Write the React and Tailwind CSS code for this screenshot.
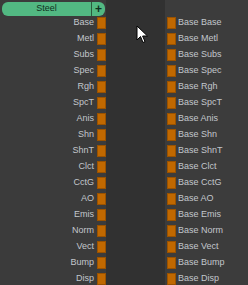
import React from 'react'

const inputs = ['Base', 'Metl', 'Subs', 'Spec', 'Rgh', 'SpcT', 'Anis', 'Shn', 'ShnT', 'Clct', 'CctG', 'AO', 'Emis', 'Norm', 'Vect', 'Bump', 'Disp']

function Port() {
    return <div className="h-[12px] w-[9px] bg-[#c06800] border border-[#9a5200]" />
}

export default function App() {
    return (
        <div
            className="relative flex h-[285px] w-[248px] overflow-hidden bg-[#313131] text-[9px] text-[#c3c7cc]"
            style={{ fontFamily: '"Liberation Sans", Arial, sans-serif' }}
        >
            <div className="w-[106px] bg-[#3b3b3b] pt-[2px]">
                <div className="ml-[2px] flex h-[14px] w-[103px] items-stretch overflow-hidden rounded-[6px] bg-[#52b882] text-[#10301f]">
                    <div className="flex flex-1 items-center justify-center text-[9px]">Steel</div>
                    <div className="flex w-[14px] items-center justify-center border-l border-[#2a5a3e] text-[12px] font-bold leading-none">+</div>
                </div>
                <div className="mt-[-1px]">
                    {inputs.map((n) => (
                        <div key={n} className="flex h-[16px] items-center justify-end gap-[3px] pr-[0px]">
                            <span>{n}</span>
                            <Port />
                        </div>
                    ))}
                </div>
            </div>
            <div className="w-[59px]" />
            <div className="flex-1 bg-[#3c3c3c] pt-[15px] pl-[2px]">
                {inputs.map((n) => (
                    <div key={n} className="flex h-[16px] items-center gap-[2px]">
                        <Port />
                        <span>Base {n}</span>
                    </div>
                ))}
            </div>
            <svg className="absolute left-[136px] top-[25px]" width="13" height="19" viewBox="0 0 13 19">
                <path d="M1 1 L1 15 L4.5 11.5 L7 17.5 L9 16.6 L6.6 11 L11.5 11 Z" fill="#fff" stroke="#000" strokeWidth="1" />
            </svg>
        </div>
    )
}
